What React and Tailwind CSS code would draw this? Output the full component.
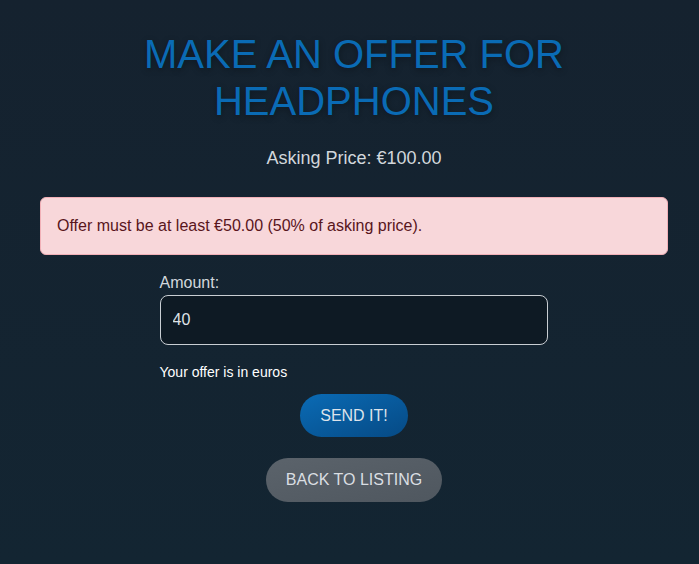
export default function App() {
    return (
        <div className="min-h-[564px] w-full bg-gradient-to-b from-[#15222f] to-[#132532] font-['Liberation_Sans',Arial,sans-serif]">
            <div className="pl-[9px] pt-[31px] pb-[62px]">
                <div className="mx-auto w-[628px] flex flex-col items-center">
                    <h1 className="text-center text-[40px] leading-[47px] text-[#0a6bb5] [text-shadow:0_2px_6px_rgba(0,0,0,0.35)] px-[70px]">
                        MAKE AN OFFER FOR HEADPHONES
                    </h1>
                    <p className="mt-[22px] text-[18px] leading-[22px] text-[#d2d7dc]">Asking Price: €100.00</p>

                    <div className="mt-[28px] w-full rounded-[6px] border border-[#f1b0b7] bg-[#f8d7da] px-4 py-[18px] text-[16px] leading-[20px] text-[#58151c]">
                        Offer must be at least €50.00 (50% of asking price).
                    </div>

                    <form className="mt-[18px] w-[387px] flex flex-col" onSubmit={e => e.preventDefault()}>
                        <div className="-ml-[1px] flex flex-col">
                            <label className="text-[16px] leading-[20px] text-[#d2d7dc]">Amount:</label>
                            <input
                                type="text"
                                defaultValue="40"
                                className="mt-[2px] h-[50px] w-full rounded-[8px] border border-[#c9ced3] bg-[#0e1a24] px-3 text-[16px] text-[#dfe3e7] outline-none"
                            />
                            <p className="mt-[19px] text-[14px] leading-[16px] text-white">Your offer is in euros</p>
                        </div>
                        <div className="mt-[14px] flex flex-col items-center gap-[21px]">
                            <button
                                type="submit"
                                className="h-[43px] w-[108px] rounded-full bg-gradient-to-br from-[#0a6bb5] to-[#064a85] text-[16px] text-[#dde3ea]"
                            >
                                SEND IT!
                            </button>
                            <button
                                type="button"
                                className="h-[44px] w-[176px] rounded-full bg-gradient-to-br from-[#5b636b] to-[#4f575f] text-[16px] text-[#dadee2]"
                            >
                                BACK TO LISTING
                            </button>
                        </div>
                    </form>
                </div>
            </div>
        </div>
    );
}
